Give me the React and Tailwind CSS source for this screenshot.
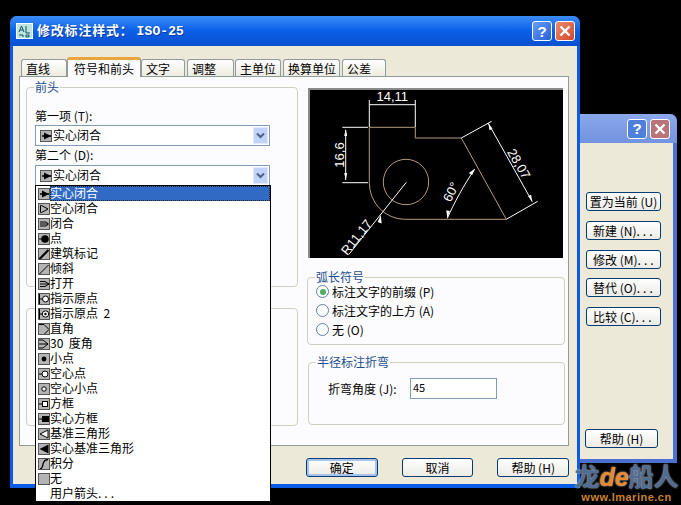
const dots = <span className="tracking-[3px]">...</span>;

const arrowItems = [
  { label: '实心闭合', icon: 'solid', selected: true },
  { label: '空心闭合', icon: 'hollow' },
  { label: '闭合', icon: 'closed' },
  { label: '点', icon: 'dot' },
  { label: '建筑标记', icon: 'tick' },
  { label: '倾斜', icon: 'oblique' },
  { label: '打开', icon: 'open' },
  { label: '指示原点', icon: 'origin' },
  { label: '指示原点\u00a0\u00a02', icon: 'origin2' },
  { label: '直角', icon: 'right' },
  { label: '30\u00a0\u00a0度角', icon: 'angle30' },
  { label: '小点', icon: 'smallDot' },
  { label: '空心点', icon: 'hollowDot' },
  { label: '空心小点', icon: 'hollowSmall' },
  { label: '方框', icon: 'box' },
  { label: '实心方框', icon: 'solidBox' },
  { label: '基准三角形', icon: 'datum' },
  { label: '实心基准三角形', icon: 'solidDatum' },
  { label: '积分', icon: 'integral' },
  { label: '无', icon: 'none' },
  { label: <>用户箭头{dots}</>, id: 'user' },
];

const glyphs = {
  solid: <><path d="M1 5h4M10 5H5" stroke="#000" strokeWidth="1.4" /><path d="M10 5 3 1.500v7z" fill="#000" /></>,
  hollow: <path d="M1.500 1.500h1L9 5 2.500 8.500h-1z" fill="none" stroke="#000" />,
  closed: <path d="M1 3h6l2.500 2L7 7H1M1 5h8" fill="none" stroke="#000" />,
  dot: <><path d="M0 5h5" stroke="#000" /><circle cx="6" cy="5" r="3.800" fill="#000" /></>,
  tick: <path d="M.5 10 9.500 1" stroke="#000" strokeWidth="2.200" />,
  oblique: <path d="M.5 10 9.500 1" stroke="#000" />,
  open: <path d="M1 2.500h5L10 5 6 7.500H1M1 5h9" fill="none" stroke="#000" />,
  origin: <><path d="M.5 0v10M.5 5h3" stroke="#000" /><circle cx="6.500" cy="5" r="3" fill="#fff" stroke="#000" /></>,
  origin2: <><path d="M.5 0v10M.5 5h3" stroke="#000" /><circle cx="6.500" cy="5" r="3.200" fill="#fff" stroke="#000" /><circle cx="6.500" cy="5" r="1.200" fill="#000" /></>,
  right: <path d="M0 .5h5L10 5.500 5 10.500H0" fill="none" stroke="#000" />,
  angle30: <path d="M0 1h4l5 4-5 4H0M0 5h9" fill="none" stroke="#000" />,
  smallDot: <circle cx="5" cy="5" r="2.400" fill="#000" />,
  hollowDot: <><path d="M0 5h3" stroke="#000" /><circle cx="6" cy="5" r="3" fill="#fff" stroke="#000" /></>,
  hollowSmall: <circle cx="5" cy="5" r="2.200" fill="#fff" stroke="#000" />,
  box: <><path d="M0 5h3" stroke="#000" /><rect x="3.500" y="2.500" width="5" height="5" fill="#fff" stroke="#000" /></>,
  solidBox: <><path d="M0 5h3" stroke="#000" /><rect x="3" y="2" width="7" height="6" fill="#000" /></>,
  datum: <path d="M1 5 9 1v8z" fill="#fff" stroke="#000" />,
  solidDatum: <path d="M.5 5 9.500.5v9z" fill="#000" />,
  integral: <path d="M1 10c3 0 2.500-4 3.500-6.500S6.500.5 9 .5" fill="none" stroke="#000" strokeWidth="1.300" />,
  none: null,
};

function ArrowIcon({ name }) {
  return (
    <svg width="12" height="12" viewBox="0 0 10 10" className="shrink-0 bg-[#b4b4b4] border border-[#555]">
      {glyphs[name]}
    </svg>
  );
}

function Combo({ children }) {
  return (
    <div className="relative h-[21px] w-[235px] border border-[#7f9db9] bg-white flex items-center pl-[4px] gap-[1px]">
      <ArrowIcon name="solid" />
      <span className="pb-[2px]">实心闭合</span>
      <div className="absolute right-[1px] top-[1px] bottom-[1px] w-[15px] bg-[#c1d3fb] border border-[#e1eafe] flex items-center justify-center">
        <svg width="9" height="7" viewBox="0 0 9 7"><path d="M1 1.500 4.500 5 8 1.500" fill="none" stroke="#4d6185" strokeWidth="2" /></svg>
      </div>
      {children}
    </div>
  );
}

function ArrowList() {
  return (
    <div className="absolute left-[-1px] top-[19px] z-20 w-[236px] border-x border-t border-black bg-white">
      {arrowItems.map((item) => (
        <div key={item.id || item.label} className="h-[15px] flex items-center pl-[2px]">
          {item.icon ? <ArrowIcon name={item.icon} /> : <span className="w-[12px] shrink-0" />}
          <span className={`h-[15px] leading-[13px] ${item.selected ? 'flex-1 bg-[#316ac5] text-white outline-1 outline-dotted outline-offset-[-1px] outline-[#222]' : ''}`}>
            {item.label}
          </span>
        </div>
      ))}
    </div>
  );
}

function Group({ title, className, children }) {
  return (
    <fieldset className={`border border-[#d0d0bf] rounded-[4px] ${className}`}>
      <legend className="ml-[7px] px-[1px] text-[#1c4e8f] leading-[12px]">{title}</legend>
      {children}
    </fieldset>
  );
}

function Radio({ checked, label }) {
  return (
    <div className="flex items-center gap-[3px] h-[19px]">
      <span className="size-[13px] rounded-full border border-[#5f7f9f] bg-white flex items-center justify-center">
        {checked && <span className="size-[6px] rounded-full bg-[#4fae5c]" />}
      </span>
      <span>{label}</span>
    </div>
  );
}

function XpButton({ isDefault, className, children }) {
  return (
    <div className={`h-[19px] rounded-[3px] border border-[#003c74] flex items-center justify-center bg-gradient-to-b from-white to-[#ecebe5] ${isDefault ? 'shadow-[inset_0_0_0_2px_#a9c4ec]' : ''} ${className}`}>
      {children}
    </div>
  );
}

function TitleButton({ close, faded }) {
  const tone = close
    ? faded ? 'bg-[#b87478]' : 'bg-gradient-to-br from-[#ec8a6c] to-[#d2452a]'
    : faded ? 'bg-[#4f7fdc]' : 'bg-gradient-to-br from-[#6a9cf6] to-[#2560d8]';
  return (
    <div className={`size-[20px] rounded-[3px] border border-white flex items-center justify-center text-white font-bold text-[15px] leading-none ${tone}`}>
      {close ? (
        <svg width="12" height="12" viewBox="0 0 12 12"><path d="M1.500 1.500 10.500 10.500M10.500 1.500 1.500 10.500" stroke="#fff" strokeWidth="2.400" /></svg>
      ) : (
        <span className="font-['Liberation_Sans']">?</span>
      )}
    </div>
  );
}

function Preview() {
  return (
    <div className="h-[170px] w-[255px] bg-black border-t-[2px] border-l-[2px] border-[#8a8a8a]">
      <svg width="253" height="168" viewBox="311 90 253 168" fontFamily="'Liberation Sans', sans-serif" fontSize="13" fill="#fff">
        <path d="M370.300 127.300H416.300V138H462.300L507.300 219.300H405.700A35.500 36.500 0 0 1 370.300 182.700Z" fill="none" stroke="#b39b7e" />
        <circle cx="407" cy="182" r="22.700" fill="none" stroke="#b39b7e" />
        <g stroke="#fff" fill="none">
          <path d="M370.300 100V127M416.300 100V127M370.300 104.700H416.300" />
          <path d="M343.300 127.300H369M343.300 182.700H369M346.700 130V180" />
          <path d="M407.300 182.300 350 254.300" />
          <path d="M448.300 218.300C455 203 465 185 475.700 169" />
          <path d="M462.300 138 492.700 121.300M507.300 219.300 538.700 201.300M489.300 123.300 533.300 201.700" />
        </g>
        <path d="M346.700 129l-1.500 7h3zM346.700 180l-1.500-7h3zM381.700 215l-3 7 4 1.500zM475.700 169l-6 4 3.500 2zM448.300 218.300l-1-8 3.500 .8zM489.300 123.300l1.200 7 3-1.600zM533.300 201.700l-1.200-7-3 1.600z" fill="#fff" />
        <text x="393.300" y="101" textAnchor="middle">14,11</text>
        <text transform="translate(345 155) rotate(-90)" textAnchor="middle">16,6</text>
        <text transform="translate(361 240) rotate(-51.500)" textAnchor="middle">R11,17</text>
        <text transform="translate(456 194) rotate(-63)" textAnchor="middle">60°</text>
        <text transform="translate(516 166) rotate(60)" textAnchor="middle">28,07</text>
      </svg>
    </div>
  );
}

function Tab({ active, className, children }) {
  if (active) {
    return (
      <div className={`relative z-10 h-[20px] bg-[#fcfcfe] border-x border-[#919b9c] border-t-[3px] border-t-[#e8a53c] rounded-t-[3px] flex items-center justify-center ${className}`}>
        {children}
      </div>
    );
  }
  return (
    <div className={`h-[18px] mt-[2px] bg-gradient-to-b from-white to-[#ecebe0] border-x border-t border-[#919b9c] rounded-t-[3px] flex items-center pl-[4px] ${className}`}>
      {children}
    </div>
  );
}

function MainDialog() {
  return (
    <div className="absolute left-[10px] top-[16px] z-10 w-[570px] h-[472px] rounded-t-[7px] bg-[#0a5ce8] flex flex-col px-[3px] pb-[4px]">
      <div className="h-[30px] shrink-0 -mx-[3px] rounded-t-[7px] bg-gradient-to-b from-[#3a8cf6] via-[#0a5fe8] to-[#0a50d0] flex items-center pl-[6px] pr-[5px]">
        <svg width="17" height="16" viewBox="0 0 17 16" className="shrink-0">
          <rect x=".5" y=".5" width="16" height="15" fill="#bfe3de" stroke="#fff" />
          <path d="M3 9 5.500 3 8 9M4 7h3M10 3v7h4M3 12h4v2M10 12h3v2h-3z" fill="none" stroke="#0c5a63" />
        </svg>
        <span className="ml-[4px] text-white font-bold text-[13px] tracking-[0.8px] flex-1 [text-shadow:1px_1px_#0a3aa0]">
          修改标注样式：<span className="ml-[3px] font-['Liberation_Mono'] tracking-[0.1px]">ISO-25</span>
        </span>
        <div className="flex gap-[3px]">
          <TitleButton />
          <TitleButton close />
        </div>
      </div>

      <div className="flex-1 bg-[#ece9d8] pt-[11px] pl-[6px] pr-[8px] flex flex-col">
        <div className="flex h-[20px] pl-[2px]">
          <Tab className="w-[46px]">直线</Tab>
          <Tab active className="w-[74px]">符号和前头</Tab>
          <Tab className="w-[44px]">文字</Tab>
          <Tab className="w-[47px] ml-[2px]">调整</Tab>
          <Tab className="w-[46px] ml-[1px]">主单位</Tab>
          <Tab className="w-[57px] ml-[2px]">换算单位</Tab>
          <Tab className="w-[44px] ml-[2px]">公差</Tab>
        </div>
        <div className="-mt-[1px] h-[370px] bg-[#fcfcfe] border border-[#919b9c] pl-[6px] pt-[4px] flex gap-[9px]">
          <div className="w-[272px] flex flex-col">
            <Group title="前头" className="h-[206px]">
              <div className="px-[8px]">
                <div className="mt-[16px] h-[16px] leading-[13px]">第一项 (T):</div>
                <Combo />
                <div className="h-[19px] leading-[17px]">第二个 (D):</div>
                <Combo>
                  <ArrowList />
                </Combo>
              </div>
            </Group>
            <div className="mt-[21px] h-[118px] border border-[#d0d0bf] rounded-[4px]" />
          </div>
          <div className="w-[258px] flex flex-col">
            <div className="ml-[1px] mt-[7px]"><Preview /></div>
            <Group title="弧长符号" className="mt-[13px] h-[74px]">
              <div className="pl-[8px] -mt-[1px]">
                <Radio checked label="标注文字的前缀 (P)" />
                <Radio label="标注文字的上方 (A)" />
                <Radio label="无 (O)" />
              </div>
            </Group>
            <Group title="半径标注折弯" className="mt-[11px] h-[69px] ml-[1px]">
              <div className="pl-[19px] mt-[10px] flex items-center">
                <span className="w-[82px]">折弯角度 (J):</span>
                <div className="h-[21px] w-[87px] border border-[#7f9db9] bg-white pl-[2px] text-[11px] leading-[17px]">45</div>
              </div>
            </Group>
          </div>
        </div>
        <div className="mt-[12px] flex gap-[24px] pl-[287px]">
          <XpButton isDefault className="w-[72px]">确定</XpButton>
          <XpButton className="w-[72px]">取消</XpButton>
          <XpButton className="w-[72px]">帮助 (H)</XpButton>
        </div>
      </div>
    </div>
  );
}

function StyleManagerDialog() {
  return (
    <div className="absolute left-[480px] top-[114px] w-[197px] h-[349px] rounded-t-[7px] bg-[#4d6fd0] flex flex-col pr-[4px] pb-[4px]">
      <div className="h-[29px] shrink-0 -mr-[4px] rounded-t-[7px] bg-gradient-to-b from-[#8aa8ea] to-[#7392e0] flex items-center justify-end gap-[3px] pr-[7px]">
        <TitleButton faded />
        <TitleButton close faded />
      </div>
      <div className="flex-1 bg-[#ece9d8] pl-[106px] pt-[49px] flex flex-col">
        <XpButton className="w-[75px]">置为当前 (U)</XpButton>
        <XpButton className="w-[75px] mt-[10px] !justify-start pl-[6px]">新建 (N){dots}</XpButton>
        <XpButton className="w-[75px] mt-[10px] !justify-start pl-[6px]">修改 (M){dots}</XpButton>
        <XpButton className="w-[75px] mt-[9px] !justify-start pl-[6px]">替代 (O){dots}</XpButton>
        <XpButton className="w-[75px] mt-[10px] !justify-start pl-[6px]">比较 (C){dots}</XpButton>
        <XpButton className="w-[73px] mt-[103px] -ml-[1px]">帮助 (H)</XpButton>
      </div>
    </div>
  );
}

function Watermark() {
  return (
    <div className="absolute left-[574px] top-[463px] z-30 w-[105px] flex flex-col items-center font-bold">
      <div className="text-[25px] leading-[25px] text-[#4f6c92] [text-shadow:0_0_2px_#dfe6f0] whitespace-nowrap">
        龙<span className="font-['Liberation_Sans'] italic text-[#e88a2a]">de</span>船人
      </div>
      <div className="mt-[2px] font-['Liberation_Sans'] text-[11px] leading-[11px] tracking-[0.5px] text-[#c9822f]">www.lmarine.cn</div>
    </div>
  );
}

export default function App() {
  return (
    <div className="relative w-[681px] h-[505px] overflow-hidden bg-black text-black text-[12px] font-['Noto_Sans_CJK_SC',sans-serif]">
      <StyleManagerDialog />
      <MainDialog />
      <Watermark />
    </div>
  );
}
